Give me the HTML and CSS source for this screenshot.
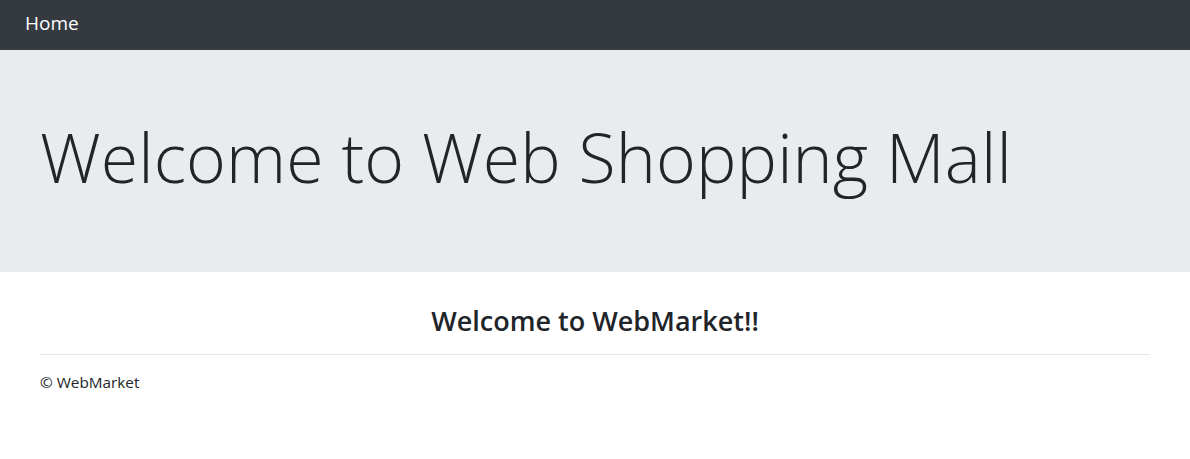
FILE: index.html
```html
<!DOCTYPE html>
<html lang="en">
<head>
<meta charset="utf-8">
<title>Welcome</title>
<link rel="stylesheet" href="styles.css">
</head>
<body>
<nav class="navbar">
  <a class="brand" href="#">Home</a>
</nav>
<div class="jumbotron">
  <div class="container">
    <h1 class="display">Welcome to Web Shopping Mall</h1>
  </div>
</div>
<div class="container">
  <div class="center">
    <h3 class="subtitle">Welcome to WebMarket!!</h3>
  </div>
</div>
<footer class="container">
  <hr class="rule">
  <p class="copy">&copy; WebMarket</p>
</footer>
</body>
</html>
```
FILE: styles.css
```css
html, body {
  margin: 0;
  padding: 0;
}
body {
  font-family: "Open Sans", "Noto Sans", "Liberation Sans", sans-serif;
  font-size: 16px;
  line-height: 1.5;
  color: #212529;
  background: #fff;
}
.navbar {
  height: 50px;
  background: #343a40;
  display: flex;
  align-items: center;
  padding: 0 25px;
  box-sizing: border-box;
}
.brand {
  color: #fff;
  text-decoration: none;
  font-size: 19px;
  line-height: 30px;
  margin-top: -4px;
}
.jumbotron {
  background: #e9ecef;
  padding: 64px 0;
  margin-bottom: 32px;
}
.container {
  width: 1140px;
  margin: 0 auto;
  padding: 0 15px;
  box-sizing: border-box;
}
.display {
  margin: 0 0 8px;
  font-size: 68px;
  font-weight: 300;
  line-height: 86.4px;
  letter-spacing: 0.1px;
}
.center {
  text-align: center;
}
.subtitle {
  margin: 0 0 8px;
  font-size: 27px;
  font-weight: 600;
  line-height: 33.6px;
}
.rule {
  margin: 16px 0;
  border: 0;
  border-top: 1px solid rgba(0,0,0,.1);
}
.copy {
  margin: 0 0 16px;
  font-size: 15.3px;
}
```
